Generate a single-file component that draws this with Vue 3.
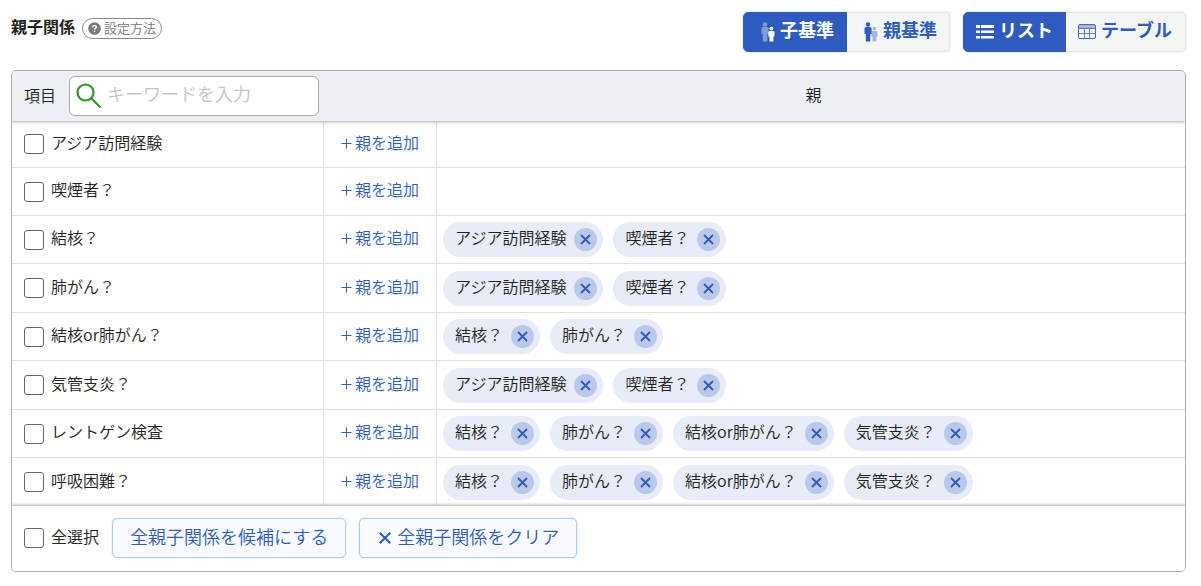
<script setup>
import { ref } from 'vue'

const ASIA = 'アジア訪問経験'
const SMOKER = '喫煙者？'
const TB = '結核？'
const CANCER = '肺がん？'
const EITHER = '結核or肺がん？'
const BRONCHITIS = '気管支炎？'

const rows = ref([
  { name: ASIA, parents: [] },
  { name: SMOKER, parents: [] },
  { name: TB, parents: [ASIA, SMOKER] },
  { name: CANCER, parents: [ASIA, SMOKER] },
  { name: EITHER, parents: [TB, CANCER] },
  { name: BRONCHITIS, parents: [ASIA, SMOKER] },
  { name: 'レントゲン検査', parents: [TB, CANCER, EITHER, BRONCHITIS] },
  { name: '呼吸困難？', parents: [TB, CANCER, EITHER, BRONCHITIS] },
])
const basis = ref('child')
const view = ref('list')
const keyword = ref('')
const clearAll = () => rows.value.forEach((r) => (r.parents = []))
</script>

<template>
  <main class="page">
    <header class="top">
      <h1 class="title">親子関係</h1>
      <button type="button" class="help">
        <svg viewBox="0 0 14 14" class="help-icon" aria-hidden="true">
          <circle cx="7" cy="7" r="6.8" fill="#7b7b7b" />
          <path d="M5 5.6C5 3.4 9 3.4 9 5.5C9 6.8 7 6.8 7 8.2M7 9.4V10.8" fill="none" stroke="#fff" stroke-width="1.5" />
        </svg>
        <span>設定方法</span>
      </button>
      <div class="switches">
        <div class="switch">
          <button type="button" :class="{ on: basis === 'child' }" @click="basis = 'child'">
            <svg class="people" viewBox="0 0 14 20" fill="currentColor" aria-hidden="true">
              <g opacity=".4">
                <circle cx="4" cy="2.5" r="2.2" />
                <path d="M2 5H6Q7.6 5 7.6 6.6V12H6.3V19.5H1.8V12H.5V6.6Q.5 5 2 5Z" />
              </g>
              <circle cx="10.4" cy="6.6" r="1.9" />
              <path d="M9 9H12Q13.5 9 13.5 10.4V14.6H12.4V19.5H8.5V14.6H7.4V10.4Q7.4 9 9 9Z" />
            </svg>
            <span>子基準</span>
          </button>
          <button type="button" :class="{ on: basis === 'parent' }" @click="basis = 'parent'">
            <svg class="people" viewBox="0 0 14 20" fill="currentColor" aria-hidden="true">
              <g opacity=".4">
                <circle cx="10.4" cy="6.6" r="1.9" />
                <path d="M9 9H12Q13.5 9 13.5 10.4V14.6H12.4V19.5H8.5V14.6H7.4V10.4Q7.4 9 9 9Z" />
              </g>
              <circle cx="4" cy="2.5" r="2.2" />
              <path d="M2 5H6Q7.6 5 7.6 6.6V12H6.3V19.5H1.8V12H.5V6.6Q.5 5 2 5Z" />
            </svg>
            <span>親基準</span>
          </button>
        </div>
        <div class="switch view">
          <button type="button" :class="{ on: view === 'list' }" @click="view = 'list'">
            <svg class="glyph" viewBox="0 0 18 16" fill="currentColor" aria-hidden="true">
              <path d="M0 1H4V4H0ZM5 1H18V4H5ZM0 6.5H4V9H0ZM5 6.5H18V9H5ZM0 12H4V14.5H0ZM5 12H18V14.5H5Z" />
            </svg>
            <span>リスト</span>
          </button>
          <button type="button" :class="{ on: view === 'table' }" @click="view = 'table'">
            <svg class="glyph" viewBox="0 0 18 16" fill="none" stroke="currentColor" aria-hidden="true">
              <path d="M1 1H17V5H1Z" fill="currentColor" stroke="none" opacity=".4" />
              <rect x=".5" y=".5" width="17" height="14" rx="1.5" stroke-width=".9" />
              <path d="M1 4.5H17M1 9.5H17M6.5 5V14M11.5 5V14" stroke-width=".7" />
            </svg>
            <span>テーブル</span>
          </button>
        </div>
      </div>
    </header>

    <section class="panel">
      <div class="scroll">
        <table class="grid">
          <colgroup>
            <col class="c-item" />
            <col class="c-add" />
            <col />
          </colgroup>
          <thead>
            <tr>
              <th scope="col" colspan="2">
                <div class="search-row">
                  <label for="kw">項目</label>
                  <div class="search">
                    <svg viewBox="0 0 26 26" class="lens" fill="none" stroke="#2f9330" stroke-width="2.2" aria-hidden="true">
                      <circle cx="9.5" cy="9.5" r="8" />
                      <path d="M15.3 15.3L24.5 24.5" />
                    </svg>
                    <input id="kw" v-model="keyword" type="text" placeholder="キーワードを入力" />
                  </div>
                </div>
              </th>
              <th scope="col" class="parent-head">親</th>
            </tr>
          </thead>
          <tbody>
            <tr v-for="row in rows" :key="row.name">
              <td>
                <label class="check"><input type="checkbox" /><span>{{ row.name }}</span></label>
              </td>
              <td class="add"><button type="button" class="link"><svg class="plus" viewBox="0 0 11 11" fill="none" stroke="currentColor" aria-hidden="true"><path d="M5.5 .5V10.5M.5 5.5H10.5" /></svg>親を追加</button></td>
              <td>
                <ul v-if="row.parents.length" class="chips">
                  <li v-for="p in row.parents" :key="p" class="chip">
                    <span>{{ p }}</span>
                    <button type="button" class="remove" :aria-label="p" @click="row.parents = row.parents.filter((x) => x !== p)">
                      <svg viewBox="0 0 11 11" fill="none" stroke="currentColor" stroke-width="1.8" aria-hidden="true"><path d="M1 1L10 10M10 1L1 10" /></svg>
                    </button>
                  </li>
                </ul>
              </td>
            </tr>
          </tbody>
        </table>
      </div>
      <footer class="foot">
        <label class="check"><input type="checkbox" /><span>全選択</span></label>
        <button type="button" class="action"><span>全親子関係を候補にする</span></button>
        <button type="button" class="action" @click="clearAll">
          <svg viewBox="-2 0 14 12" class="cross" fill="none" stroke="currentColor" stroke-width="2" aria-hidden="true"><path d="M.7 .7L11.3 11.3M11.3 .7L.7 11.3" /></svg>
          <span>全親子関係をクリア</span>
        </button>
      </footer>
    </section>
  </main>
</template>

<style>
body {
  background: #fff;
}
</style>

<style scoped>
* {
  box-sizing: border-box;
}
.page {
  display: flex;
  flex-direction: column;
  min-height: 100vh;
  padding: 12px 15px 14px 11px;
  font-family: "Noto Sans CJK JP", sans-serif;
  font-weight: 350;
  font-size: 16px;
  line-height: 24px;
  color: #222;
}
button,
input {
  font: inherit;
  color: inherit;
}
button {
  cursor: pointer;
}
.top {
  display: flex;
  align-items: flex-start;
  padding-bottom: 18px;
}
.title {
  margin: 2px 7px 0 0;
  font-size: 16px;
  font-weight: 700;
}
.help {
  display: flex;
  align-items: center;
  gap: 3px;
  height: 21px;
  margin-top: 6px;
  padding: 0 5px;
  border: 1px solid #888;
  border-radius: 11px;
  background: #fff;
  color: #777;
  font-size: 13px;
  line-height: 19px;
}
.help span {
  padding-bottom: 2px;
}
.help-icon {
  width: 13px;
  height: 13px;
}
.switches {
  display: flex;
  gap: 13px;
  margin-left: auto;
}
.switch {
  display: flex;
  border-radius: 5px;
  box-shadow: 0 0 2px #ccc;
}
.switch button {
  display: flex;
  align-items: center;
  gap: 5px;
  height: 40px;
  padding: 0 12px 0 17px;
  border: 1px solid #e3e6e3;
  border-left: 0;
  border-radius: 0 5px 5px 0;
  background: #f4f6f4;
  color: #2d5bbf;
  font-size: 18px;
  font-weight: 700;
}
.view button {
  padding: 0 12px;
}
.view button:last-child {
  padding-right: 13px;
}
.switch button span {
  padding-bottom: 7px;
}
.switch button:first-child {
  border-left: 1px solid #e3e6e3;
  border-radius: 5px 0 0 5px;
}
.switch button.on {
  border-color: #2d5bbf;
  background: #2d5bbf;
  color: #fff;
}
.people {
  width: 14px;
  height: 20px;
}
.glyph {
  width: 18px;
  height: 16px;
}
.panel {
  display: flex;
  flex: 1;
  flex-direction: column;
  overflow: hidden;
  border: 1px solid #aaa;
  border-radius: 5px;
}
.scroll {
  display: flex;
  flex: 1;
}
.grid {
  width: 100%;
  table-layout: fixed;
  border-spacing: 0;
}
.c-item {
  width: 311px;
}
.c-add {
  width: 113px;
}
thead {
  position: relative;
  box-shadow: 0 1px 3px #aaa;
}
th {
  height: 50px;
  padding: 0 0 0 12px;
  background: #eeeff5;
  font-weight: 350;
  text-align: left;
}
.parent-head {
  padding: 0 0 4px 6px;
  text-align: center;
}
.search-row {
  display: flex;
  align-items: center;
  gap: 13px;
}
.search-row label {
  padding-bottom: 3px;
}
.search {
  display: flex;
  align-items: center;
  gap: 5px;
  width: 250px;
  height: 40px;
  padding: 0 6px;
  border: 1px solid #aaa;
  border-radius: 6px;
  background: #fff;
}
.lens {
  flex: none;
  width: 26px;
  height: 26px;
}
.search input {
  min-width: 0;
  flex: 1;
  padding: 0 0 6px;
  border: 0;
  outline: 0;
  background: none;
  font-size: 18px;
}
.search input::placeholder {
  color: #c4c4c4;
}
td {
  height: 47px;
  padding: 0 0 0 6px;
  border-bottom: 1px solid #dfe2df;
}
td + td {
  border-left: 1px solid #dfe2df;
}
td:first-child {
  padding-left: 12px;
}
tbody tr:last-child td {
  border-bottom: 0;
}
.add {
  padding: 0;
  text-align: center;
}
.link {
  padding: 0 0 5px;
  border: 0;
  background: none;
  color: #2d5bbf;
}
.plus {
  width: 11px;
  height: 11px;
  margin-right: 3px;
}
.check {
  display: flex;
  align-items: center;
  gap: 7px;
}
.check span {
  padding-bottom: 5px;
}
.check input {
  appearance: none;
  width: 20px;
  height: 20px;
  margin: 0;
  border: 1px solid #666;
  border-radius: 3px;
  background: #fff;
}
.check input:checked {
  background: #2d5bbf;
}
.chips {
  display: flex;
  flex-wrap: wrap;
  gap: 10px;
  margin: 0;
  padding: 6px 0;
  list-style: none;
}
.chip {
  display: flex;
  align-items: center;
  gap: 8px;
  height: 35px;
  padding: 0 6px 0 12px;
  border-radius: 18px;
  background: #e8ecf8;
}
.chip span {
  padding-bottom: 5px;
}
.remove {
  display: grid;
  place-items: center;
  width: 23px;
  height: 23px;
  padding: 0;
  border: 0;
  border-radius: 50%;
  background: #bac9e9;
  color: #2d5bbf;
}
.remove svg {
  width: 11px;
  height: 11px;
}
.foot {
  position: relative;
  display: flex;
  align-items: center;
  gap: 13px;
  padding: 12px 12px 13px;
  background: #fff;
  box-shadow: 0 -1px 3px #aaa;
}
.action {
  display: flex;
  align-items: center;
  gap: 6px;
  height: 40px;
  padding: 0 17px;
  border: 1px solid #a9cdf8;
  border-radius: 5px;
  background: #f8fbff;
  box-shadow: 0 0 2px #cde;
  color: #2d5bbf;
  font-size: 18px;
}
.action span {
  padding-bottom: 4px;
}
.cross {
  width: 14px;
  height: 12px;
}
</style>
